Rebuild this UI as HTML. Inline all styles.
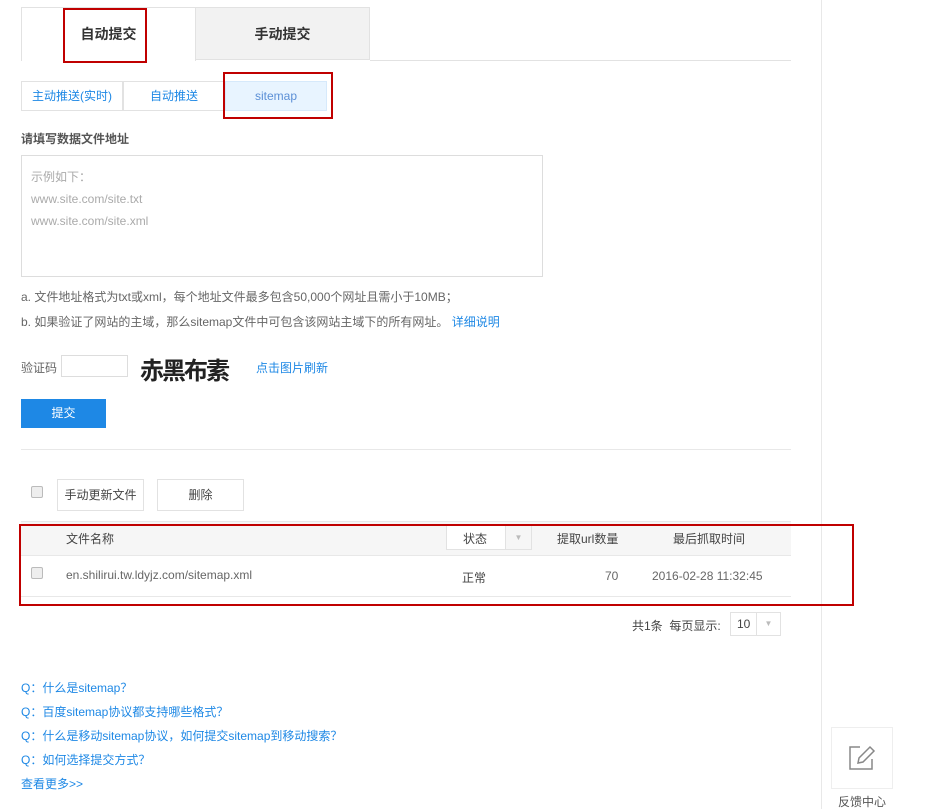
<!DOCTYPE html>
<html><head><meta charset="utf-8"><style>
*{margin:0;padding:0;box-sizing:border-box}
body{width:928px;height:809px;background:#fff;position:relative;overflow:hidden;font-family:"Liberation Sans","Noto Sans CJK SC",sans-serif;font-size:12px;color:#666}
.a{position:absolute}
.blue{color:#1e88e5}
.red{position:absolute;border:2px solid #c00000}
</style></head><body>
<div class="a" style="left:821px;top:0;width:1px;height:809px;background:#e8e8e8"></div>
<div class="a" style="left:21px;top:7px;width:175px;height:54px;border:1px solid #e2e2e2;border-bottom:none;background:#fff;text-align:center;line-height:52px;font-size:14px;font-weight:bold;color:#333">自动提交</div>
<div class="a" style="left:195px;top:7px;width:175px;height:53px;border:1px solid #e2e2e2;background:#f2f2f2;text-align:center;line-height:52px;font-size:14px;font-weight:bold;color:#333">手动提交</div>
<div class="a" style="left:370px;top:60px;width:421px;height:1px;background:#e2e2e2"></div>
<div class="red" style="left:63px;top:8px;width:84px;height:55px"></div>
<div class="a blue" style="left:21px;top:81px;width:102px;height:30px;border:1px solid #e2e2e2;text-align:center;line-height:28px">主动推送(实时)</div>
<div class="a blue" style="left:123px;top:81px;width:102px;height:30px;border:1px solid #e2e2e2;text-align:center;line-height:28px">自动推送</div>
<div class="a" style="left:225px;top:81px;width:102px;height:30px;border:1px solid #d6e9fb;background:#e8f4ff;text-align:center;line-height:28px;color:#5b8fd6">sitemap</div>
<div class="red" style="left:223px;top:72px;width:110px;height:47px"></div>
<div class="a" style="left:21px;top:130px;font-weight:bold;color:#555">请填写数据文件地址</div>
<div class="a" style="left:21px;top:155px;width:522px;height:122px;border:1px solid #ddd;padding:10px 9px;color:#aaa;line-height:22px">示例如下：<br>www.site.com/site.txt<br>www.site.com/site.xml</div>
<div class="a" style="left:21px;top:288px">a. 文件地址格式为txt或xml，每个地址文件最多包含50,000个网址且需小于10MB；</div>
<div class="a" style="left:21px;top:313px">b. 如果验证了网站的主域，那么sitemap文件中可包含该网站主域下的所有网址。 <span class="blue">详细说明</span></div>
<div class="a" style="left:21px;top:359px">验证码</div>
<div class="a" style="left:61px;top:355px;width:67px;height:22px;border:1px solid #ddd"></div>
<div class="a" style="left:140px;top:352px;width:97px;height:34px;font-family:'Noto Sans CJK SC',sans-serif;font-size:24px;font-weight:bold;color:#222;letter-spacing:-2px;line-height:34px">赤黑布素</div>
<div class="a blue" style="left:256px;top:359px">点击图片刷新</div>
<div class="a" style="left:21px;top:399px;width:85px;height:29px;background:#1e88e5;color:#fff;text-align:center;line-height:29px">提交</div>
<div class="a" style="left:21px;top:449px;width:770px;height:1px;background:#e8e8e8"></div>
<div class="a" style="left:31px;top:486px;width:12px;height:12px;border:1px solid #bbb;border-radius:2px;background:#eee"></div>
<div class="a" style="left:57px;top:479px;width:87px;height:32px;border:1px solid #e2e2e2;text-align:center;line-height:30px;color:#444">手动更新文件</div>
<div class="a" style="left:157px;top:479px;width:87px;height:32px;border:1px solid #e2e2e2;text-align:center;line-height:30px;color:#444">删除</div>
<div class="a" style="left:21px;top:521px;width:770px;height:35px;background:#f6f6f6;border-top:1px solid #e8e8e8;border-bottom:1px solid #e8e8e8"></div>
<div class="a" style="left:66px;top:530px;color:#444">文件名称</div>
<div class="a" style="left:446px;top:525px;width:86px;height:25px;border:1px solid #e2e2e2;background:#fff"></div>
<div class="a" style="left:505px;top:526px;width:26px;height:23px;border-left:1px solid #e2e2e2;background:#f6f6f6;color:#bbb;font-size:8px;text-align:center;line-height:23px">▼</div>
<div class="a" style="left:463px;top:530px;color:#444">状态</div>
<div class="a" style="left:557px;top:530px;color:#444">提取url数量</div>
<div class="a" style="left:673px;top:530px;color:#444">最后抓取时间</div>
<div class="a" style="left:31px;top:567px;width:12px;height:12px;border:1px solid #bbb;border-radius:2px;background:#eee"></div>
<div class="a" style="left:66px;top:568px;color:#666">en.shilirui.tw.ldyjz.com/sitemap.xml</div>
<div class="a" style="left:462px;top:569px;color:#444">正常</div>
<div class="a" style="left:605px;top:569px;color:#666">70</div>
<div class="a" style="left:652px;top:569px;color:#666">2016-02-28 11:32:45</div>
<div class="a" style="left:21px;top:596px;width:770px;height:1px;background:#e8e8e8"></div>
<div class="red" style="left:19px;top:524px;width:835px;height:82px"></div>
<div class="a" style="left:632px;top:617px;color:#444">共1条 &nbsp;每页显示:</div>
<div class="a" style="left:730px;top:612px;width:51px;height:24px;border:1px solid #e2e2e2"></div>
<div class="a" style="left:737px;top:617px;color:#444">10</div>
<div class="a" style="left:756px;top:613px;width:24px;height:22px;border-left:1px solid #e2e2e2;color:#bbb;font-size:8px;text-align:center;line-height:22px">▼</div>
<div class="a blue" style="left:21px;top:676px;line-height:24px">Q：什么是sitemap？<br>Q：百度sitemap协议都支持哪些格式？<br>Q：什么是移动sitemap协议，如何提交sitemap到移动搜索？<br>Q：如何选择提交方式？<br>查看更多&gt;&gt;</div>
<div class="a" style="left:831px;top:727px;width:62px;height:62px;border:1px solid #eee;background:#fff">
<svg width="60" height="60" viewBox="0 0 60 60" style="position:absolute;left:0;top:0"><path d="M28 19H18v22h22V31" fill="none" stroke="#888" stroke-width="1.5"/><path d="M26 35l1-5 11-11 4 4-11 11z" fill="none" stroke="#888" stroke-width="1.5"/></svg></div>
<div class="a" style="left:838px;top:793px;color:#555">反馈中心</div>
</body></html>
